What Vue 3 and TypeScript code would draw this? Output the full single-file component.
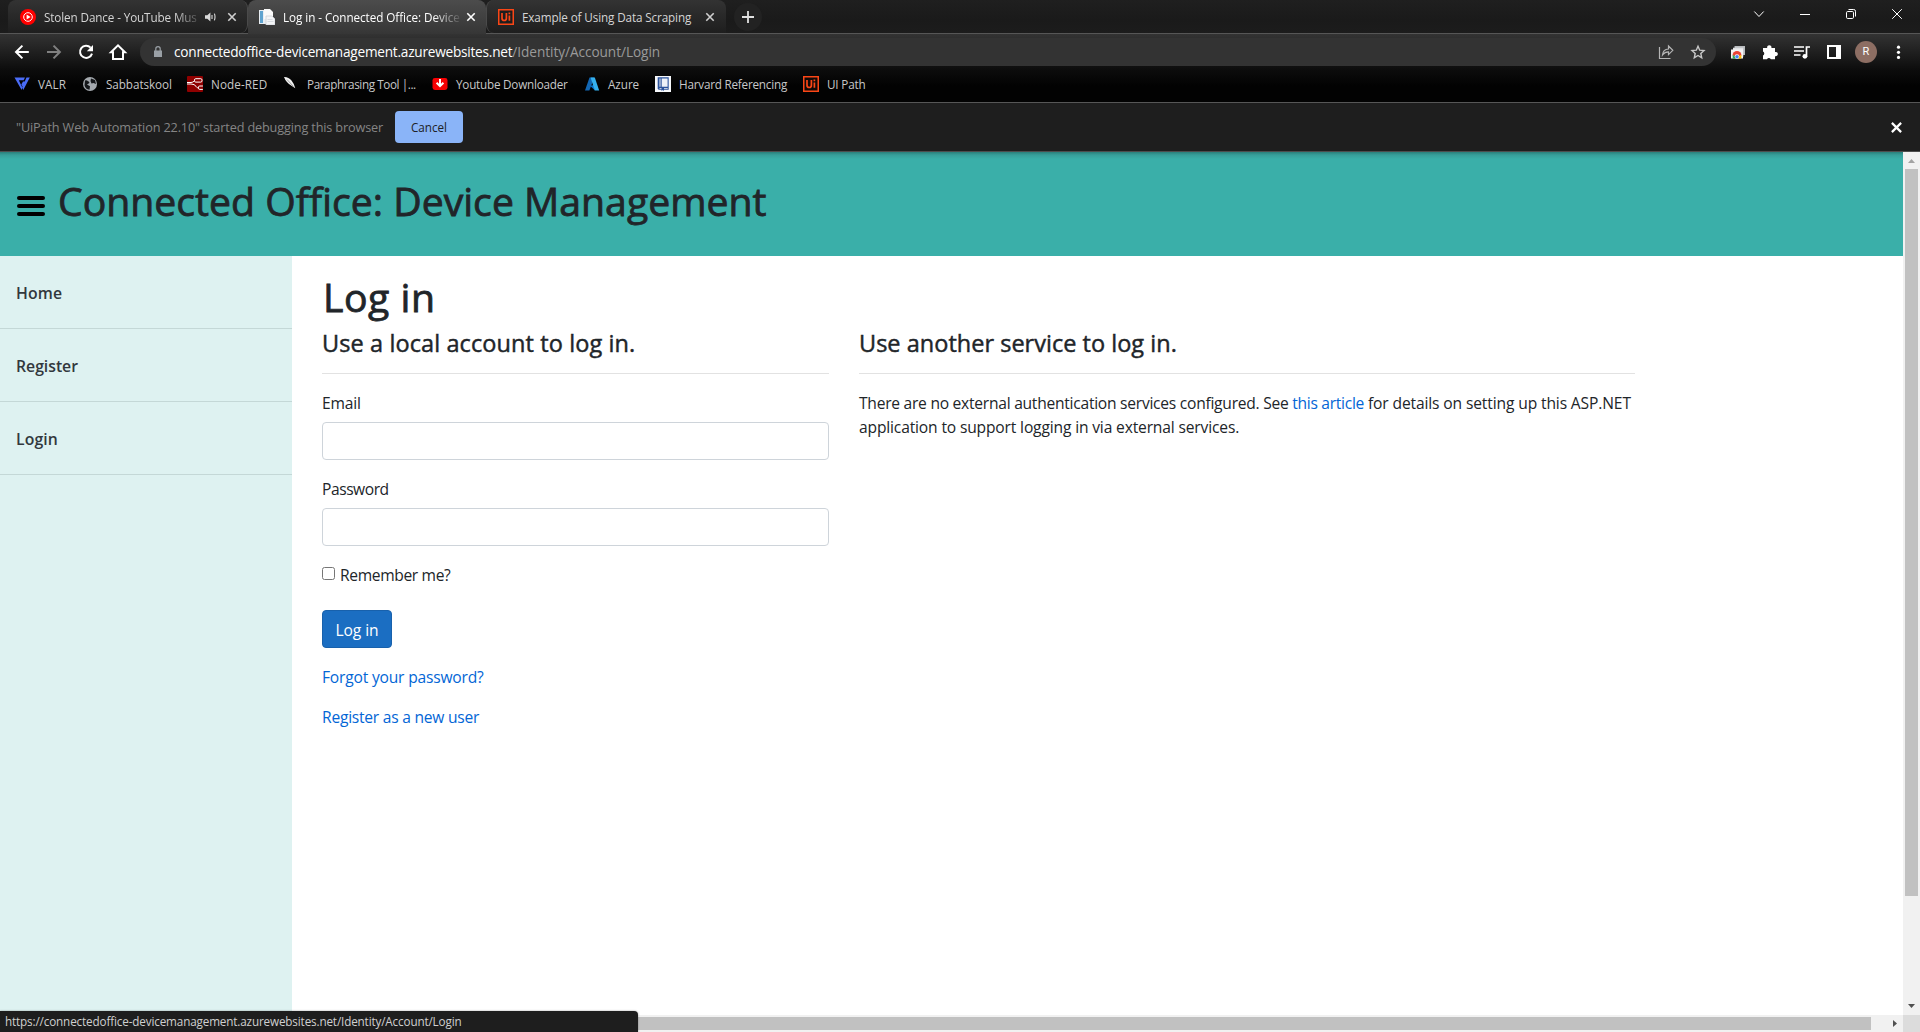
<script setup lang="ts">
interface Bookmark {
  icon: string
  label: string
  width: number
  spacing: number
}

const bookmarks: Bookmark[] = [
  { icon: 'valr', label: 'VALR', width: 68, spacing: 0.08 },
  { icon: 'globe', label: 'Sabbatskool', width: 105, spacing: -0.06 },
  { icon: 'nodered', label: 'Node-RED', width: 96, spacing: 0.1 },
  { icon: 'quill', label: 'Paraphrasing Tool |...', width: 149, spacing: -0.4 },
  { icon: 'download', label: 'Youtube Downloader', width: 152, spacing: -0.22 },
  { icon: 'azure', label: 'Azure', width: 71, spacing: -0.05 },
  { icon: 'book', label: 'Harvard Referencing', width: 148, spacing: -0.21 },
  { icon: 'uipath', label: 'UI Path', width: 80, spacing: -0.16 },
]

const menu = ['Home', 'Register', 'Login']
</script>

<template>
  <div class="window">
    <header class="tabstrip">
      <div class="tab tab-first">
        <svg class="fav" viewBox="0 0 16 16">
          <circle cx="8" cy="8" r="8" fill="#f00" />
          <circle cx="8" cy="8" r="4.3" fill="none" stroke="#fff" stroke-width="1" />
          <path d="M6.6 5.6 10.6 8l-4 2.4z" fill="#fff" />
        </svg>
        <span class="tab-title t1">Stolen Dance - YouTube Mus</span>
        <svg class="speaker" viewBox="0 0 11 10">
          <path d="M0 3.2h2.3L5.4.4v9.2L2.3 6.8H0z" fill="#dadada" />
          <path d="M7 3v4M9.4 1.6q1.2 3.4 0 6.8" fill="none" stroke="#dadada" stroke-width="1.1" />
        </svg>
        <svg class="tab-x" viewBox="0 0 8 8"><path d="M.3.3l7.4 7.4M7.7.3.3 7.7" /></svg>
      </div>
      <div class="tab active">
        <svg class="fav" viewBox="0 0 16 16">
          <path d="M0 1h12v14H0z" fill="#e8edf2" />
          <path d="M1 2h3v12H1z" fill="#5fa3cf" />
          <path d="M5 0h6l3 3v7H5z" fill="#fafafa" />
          <path d="M7 7h6l3 3v6H7z" fill="#f3f4f6" stroke="#c5cad1" stroke-width=".7" />
          <path d="M8.5 10.5h5M8.5 12.5h6" stroke="#cfd4da" stroke-width=".8" />
        </svg>
        <span class="tab-title t2">Log in - Connected Office: Device</span>
        <svg class="tab-x white" viewBox="0 0 8 8"><path d="M.3.3l7.4 7.4M7.7.3.3 7.7" /></svg>
      </div>
      <div class="tab">
        <svg class="fav" viewBox="0 0 16 16">
          <rect x=".75" y=".75" width="14.5" height="14.5" fill="#1e1e1e" stroke="#fa4616" stroke-width="1.5" />
          <path d="M4 4v5.2q0 2.3 2.2 2.3t2.2-2.3V4M11.4 6.4v5.4M11.4 3.6v1.6" fill="none" stroke="#fa4616" stroke-width="1.7" />
        </svg>
        <span class="tab-title t3">Example of Using Data Scraping</span>
        <svg class="tab-x" viewBox="0 0 8 8"><path d="M.3.3l7.4 7.4M7.7.3.3 7.7" /></svg>
      </div>
      <div class="newtab">
        <svg viewBox="0 0 12 12"><path d="M6 0v12M0 6h12" stroke="#e0e0e0" stroke-width="1.8" /></svg>
      </div>
      <div class="controls">
        <svg viewBox="0 0 46 28"><path d="m18.3 11.5 4.7 5 4.7-5" /></svg>
        <svg viewBox="0 0 46 28"><path d="M18 14.5h10" /></svg>
        <svg viewBox="0 0 46 28">
          <rect x="18.5" y="11.5" width="7" height="7" rx="1.2" />
          <path d="M20.5 9.5h5.2q1.8 0 1.8 1.8v5.2" />
        </svg>
        <svg viewBox="0 0 46 28"><path d="m18.2 9.2 9.6 9.6m0-9.6-9.6 9.6" /></svg>
      </div>
    </header>

    <div class="toolbar">
      <div class="nav">
        <svg class="ic" viewBox="0 0 32 28"><path d="M22.800 14H10.300M16.400 7.600 10 14l6.400 6.400" stroke="#fff" stroke-width="2" fill="none" /></svg>
        <svg class="ic" viewBox="0 0 32 28"><path d="M9 14h12.6M15.5 7.6l6.4 6.4-6.4 6.4" stroke="#808080" stroke-width="2" fill="none" /></svg>
        <svg class="ic" viewBox="0 0 32 28">
          <path d="M20.6 9.6A6.1 6.1 0 1 0 22 15.6" stroke="#fff" stroke-width="2" fill="none" />
          <path d="M23 7v6.2h-6.2z" fill="#fff" />
        </svg>
        <svg class="ic" viewBox="0 0 32 28"><path d="M9 14.2 16 7.4l7 6.8h-2v6.9H11v-6.9z" stroke="#fff" stroke-width="2" fill="none" /></svg>
      </div>
      <div class="omnibox">
        <svg class="lock" viewBox="0 0 8 12">
          <path d="M0 4.5h8V11H0z" fill="#9aa0a6" />
          <path d="M1.8 5V2.8a2.2 2.2 0 0 1 4.4 0V5" stroke="#9aa0a6" stroke-width="1.2" fill="none" />
        </svg>
        <span class="url"><span class="host">connectedoffice-devicemanagement.azurewebsites.net</span><span class="path">/Identity/Account/Login</span></span>
        <svg class="ic" viewBox="0 0 32 28">
          <path d="M9.5 9v11.5h11M12.5 17q.5-5.8 6-6V8l4.3 4.3-4.3 4.3v-2.8q-3.800 0-6 3.200z" stroke="#b5b5b5" stroke-width="1.2" fill="none" />
        </svg>
        <svg class="ic" viewBox="0 0 32 28">
          <path d="m16 8.200 1.700 4 4.300.4-3.200 2.900.9 4.300-3.700-2.300-3.700 2.300.9-4.300-3.200-2.900 4.300-.4z" stroke="#c8c8c8" stroke-width="1.400" fill="none" />
        </svg>
      </div>
      <div class="actions">
        <svg class="ic" viewBox="0 0 32 28">
          <path d="M12.500 8h10.500v9h-10.500z" fill="#b8bbbe" />
          <path d="M11 9.700h10.300v9H11z" fill="#dfe1e3" />
          <path d="M9 11.500h12v9H9z" fill="#f4f4f4" />
          <path d="M10.500 17.500a4.500 4.500 0 0 1 9 0l-2.500.500h-4z" fill="#ea4335" />
          <path d="M10.700 17v3.500h3.300l-.8-2.500z" fill="#34a853" />
          <path d="M19.300 17v3.500H16l.8-2.500z" fill="#fbbc04" />
          <circle cx="15" cy="18.600" r="2.300" fill="#fff" />
          <circle cx="15" cy="18.800" r="1.800" fill="#4285f4" />
        </svg>
        <svg class="ic" viewBox="0 0 32 28">
          <path d="M9 10h4.200a2.200 2.200 0 1 1 4.200 0H21v4a2.200 2.200 0 1 1 0 4.200V21.200h-4.200a2.200 2.200 0 0 0-3.800 0H9v-3.800a2.200 2.200 0 0 0 0-4z" fill="#fff" />
        </svg>
        <svg class="ic" viewBox="0 0 32 28">
          <path d="M8 9h10M8 13h10M8 17h6.500M20.500 18.500V9H24" stroke="#fff" stroke-width="1.700" fill="none" />
          <circle cx="18.900" cy="18.300" r="2.400" fill="#fff" />
        </svg>
        <svg class="ic" viewBox="0 0 32 28">
          <path d="M9 7h14v14H9zM11 9v10h7V9z" fill="#fff" fill-rule="evenodd" />
        </svg>
        <span class="avatar-cell"><span class="avatar">R</span></span>
        <svg class="ic" viewBox="0 0 32 28">
          <g fill="#fff"><circle cx="16.500" cy="9.200" r="1.600" /><circle cx="16.500" cy="14.300" r="1.600" /><circle cx="16.500" cy="19.400" r="1.600" /></g>
        </svg>
      </div>
    </div>

    <nav class="bookmarks">
      <a v-for="b in bookmarks" :key="b.label" class="bookmark" :style="{ width: b.width + 'px' }">
        <svg v-if="b.icon === 'valr'" class="bi" viewBox="0 0 16 16">
          <path d="M.5 1.500H11L9.600 4.300H4.800l3.500 7.200L7.600 14z" fill="#4a6cf7" />
          <path d="M12.500 1.500h3.300L9.300 14l-1.200-2.600zM9 5.500h2.200L8.400 10.500 7.300 8.400z" fill="#4a6cf7" />
        </svg>
        <svg v-else-if="b.icon === 'globe'" class="bi" viewBox="0 0 16 16">
          <circle cx="8" cy="8" r="7" fill="#a4a9ae" />
          <path d="M3 4.500q2-.5 3 .8 1.500.2 1.400 1.700L5 8.500l3 1.700-.5 3.500q-4-.5-5-4.500zM9 2.500l4 1.500 1 4-2.500-1-2 .5L8.500 5z" fill="#15171a" />
        </svg>
        <svg v-else-if="b.icon === 'nodered'" class="bi" viewBox="0 0 16 16">
          <rect width="16" height="16" rx="1" fill="#8f0000" />
          <path d="M0 6.500h4q2 0 3.500-1.700M0 8h4q3.500 0 5 2.300t3 1.700" fill="none" stroke="#fff" stroke-width="1" />
          <rect x="7.500" y="2.700" width="7.500" height="3.400" rx="1.200" fill="#8f0000" stroke="#fff" />
          <rect x="11.500" y="10" width="5.500" height="3.400" rx="1.200" fill="#8f0000" stroke="#fff" />
        </svg>
        <svg v-else-if="b.icon === 'quill'" class="bi" viewBox="0 0 16 16">
          <path d="M1 1q4.500-.2 7.500 3.500 3 3.800 3.800 7.700L8.500 9.800Q3 6.500 1 1z" fill="#f2f2f2" />
          <path d="M4 3.500 10.500 10.500" stroke="#888" stroke-width=".8" />
        </svg>
        <svg v-else-if="b.icon === 'download'" class="bi" viewBox="0 0 16 16">
          <rect x=".5" y="2" width="15" height="12" rx="2.400" fill="#f60002" />
          <path d="M8 3v7M4.600 6.800 8 10.200l3.400-3.400" fill="none" stroke="#fff" stroke-width="2" />
        </svg>
        <svg v-else-if="b.icon === 'azure'" class="bi" viewBox="0 0 16 16">
          <path d="M5.500 1.500h4.700L5.400 14.500H1z" fill="#1267b4" />
          <path d="M6 9.800 10 9l1 5.500z" fill="#0a74cc" />
          <path d="M6.600 1.500h4.200l4.400 13h-4.400z" fill="#35b0ee" />
        </svg>
        <svg v-else-if="b.icon === 'book'" class="bi" viewBox="0 0 16 16">
          <path d="M0 0h16v16H0z" fill="#f6f8fb" />
          <path d="M2.700 1.200h11v12.600H4.500q-1.800 0-1.800-1.600z" fill="#2a529b" />
          <path d="M4.500 2.400h1v8.300h-1zM6.700 2.400h5.900v8.300H6.700zM4.500 12h8.200v.8H4.500z" fill="#eef2f8" />
          <path d="M6.500 11.500h2.500V15l-1.200-1-1.300 1z" fill="#2a529b" />
        </svg>
        <svg v-else class="bi" viewBox="0 0 16 16">
          <rect x=".75" y=".75" width="14.500" height="14.500" fill="#110a08" stroke="#fa4616" stroke-width="1.500" />
          <path d="M4 4v5.200q0 2.300 2.200 2.300t2.200-2.300V4M11.400 6.400v5.400M11.400 3.600v1.600" fill="none" stroke="#fa4616" stroke-width="1.700" />
        </svg>
        <span class="bookmark-label" :style="{ letterSpacing: b.spacing + 'px' }">{{ b.label }}</span>
      </a>
    </nav>

    <div class="infobar">
      <span class="info-text">"UiPath Web Automation 22.10" started debugging this browser</span>
      <button class="cancel">Cancel</button>
      <svg class="info-x" viewBox="0 0 10 10"><path d="M.8.8l8.400 8.400M9.200.8.8 9.200" stroke="#fff" stroke-width="2" /></svg>
    </div>

    <div class="viewport">
      <div class="page">
        <div class="banner">
          <span class="burger"><i></i><i></i><i></i></span>
          <h1 class="site-title">Connected Office: Device Management</h1>
        </div>
        <div class="body">
          <aside class="sidebar">
            <a v-for="m in menu" :key="m" :class="['side-item', m.toLowerCase()]">{{ m }}</a>
          </aside>
          <main class="main">
            <h1 class="login-title">Log in</h1>
            <div class="row">
              <section class="local">
                <h4 class="h4-local">Use a local account to log in.</h4>
                <hr />
                <label class="email">Email</label>
                <input class="field" type="text" />
                <label class="password">Password</label>
                <input class="field" type="password" />
                <div class="remember"><input type="checkbox" class="check" /><span>Remember me?</span></div>
                <button class="submit">Log in</button>
                <p class="forgot"><a>Forgot your password?</a></p>
                <p class="register-link"><a>Register as a new user</a></p>
              </section>
              <section class="external">
                <h4 class="h4-ext">Use another service to log in.</h4>
                <hr />
                <p class="note"><span class="n1">There are no external authentication services configured. See </span><a class="n2">this article</a><span class="n3"> for details on setting up this ASP.NET</span><br /><span class="n4">application to support logging in via external services.</span></p>
              </section>
            </div>
          </main>
        </div>
        <div class="hscroll">
          <div class="hthumb"></div>
          <svg viewBox="0 0 17 17"><path d="M7 5v7l4-3.500z" fill="#505050" /></svg>
        </div>
      </div>
      <div class="vscroll">
        <svg viewBox="0 0 17 17"><path d="M5 11h7L8.500 7z" fill="#a3a3a3" /></svg>
        <div class="vthumb"></div>
        <svg class="down" viewBox="0 0 17 17"><path d="M5 6h7l-3.500 4z" fill="#505050" /></svg>
        <div class="corner"></div>
      </div>
      <div class="status">https://connectedoffice-devicemanagement.azurewebsites.net/Identity/Account/Login</div>
    </div>
  </div>
</template>

<style>
body {
  overflow: hidden;
}
</style>

<style scoped>
* {
  box-sizing: border-box;
}
.window {
  width: 1920px;
  height: 1032px;
  display: flex;
  flex-direction: column;
  overflow: hidden;
  background: #fff;
  font-family: "Segoe UI", "Open Sans", "Noto Sans", sans-serif;
  font-size: 15.6px;
  color: #212529;
}
svg {
  display: block;
  flex: none;
}

/* Tab strip */
.tabstrip {
  height: 34px;
  flex: none;
  display: flex;
  padding-left: 8px;
  background: linear-gradient(#1f1f1f, #1a1a1a 20px, #1c1c1c);
  border-bottom: 1px solid #565656;
}
.tab {
  width: 239px;
  height: 33px;
  flex: none;
  display: flex;
  align-items: center;
  padding: 1px 12px 0;
  border-radius: 8px 8px 0 0;
  background: linear-gradient(#333, #1e1e1e);
  color: #d5d5d5;
  font-size: 11.7px;
}
.tab-first {
  border-right: 1px solid #4a4a4a;
  border-radius: 8px 8px 8px 0;
  width: 240px;
}
.tab.active {
  width: 238px;
  height: 34px;
  padding-bottom: 1px;
  background: linear-gradient(#4c4c4c, #363636);
  color: #fff;
}
.tab.active + .tab {
  border-left: 1px solid #4a4a4a;
  border-radius: 8px 8px 0 8px;
  width: 240px;
  padding-left: 11px;
}
.fav {
  width: 16px;
  height: 16px;
  margin-right: 8px;
}
.active .fav {
  margin-left: -1px;
}
.tab-title {
  flex: none;
  white-space: nowrap;
  line-height: 20px;
  padding-bottom: 1px;
}
.t1 {
  width: 156px;
  letter-spacing: -0.115px;
  -webkit-mask-image: linear-gradient(90deg, #000 130px, transparent 160px);
  mask-image: linear-gradient(90deg, #000 130px, transparent 160px);
}
.t2 {
  width: 179px;
  letter-spacing: -0.05px;
  -webkit-mask-image: linear-gradient(90deg, #000 150px, transparent 180px);
  mask-image: linear-gradient(90deg, #000 150px, transparent 180px);
}
.t3 {
  width: 178px;
  letter-spacing: -0.12px;
}
.speaker {
  width: 11px;
  height: 10px;
  margin-left: 5px;
}
.tab-x {
  width: 8px;
  height: 8px;
  margin-left: auto;
  stroke: #d0d0d0;
  stroke-width: 1.6;
  overflow: visible;
}
.tab-first .tab-x {
  margin-right: -1px;
}
.active .tab-x {
  margin-right: -1px;
}
.white {
  stroke: #fff;
}
.newtab {
  width: 28px;
  height: 28px;
  margin: 3px 0 0 8px;
  border-radius: 14px;
  background: #222;
  display: flex;
  align-items: center;
  justify-content: center;
}
.newtab svg {
  width: 12px;
  height: 12px;
}
.controls {
  display: flex;
  margin-left: auto;
}
.controls svg {
  width: 46px;
  height: 28px;
  fill: none;
  stroke: #fff;
  stroke-width: 1;
}

/* Toolbar */
.toolbar {
  height: 36px;
  flex: none;
  display: flex;
  align-items: flex-start;
  padding: 4px 6px 0;
  background: linear-gradient(#333, #0c0c0c);
}
.nav,
.actions {
  display: flex;
  height: 28px;
}
.nav {
  width: 134px;
}
.ic {
  width: 32px;
  height: 28px;
}
.omnibox {
  width: 1576px;
  height: 28px;
  display: flex;
  align-items: center;
  padding: 0 2px 0 14px;
  border-radius: 14px;
  background: #333;
}
.lock {
  width: 8px;
  height: 12px;
}
.url {
  margin-left: 12px;
  margin-right: auto;
  font-size: 13.65px;
  line-height: 20px;
  white-space: nowrap;
  color: #9a9a9a;
}
.host {
  color: #fff;
  letter-spacing: -0.24px;
}
.path {
  letter-spacing: -0.06px;
}
.actions {
  margin-left: 6px;
}
.avatar-cell {
  width: 32px;
  display: flex;
  align-items: center;
  justify-content: center;
}
.avatar {
  width: 22px;
  height: 22px;
  border-radius: 50%;
  background: #8d6e63;
  color: #fff;
  font: 11px/22px Roboto, sans-serif;
  text-align: center;
}

/* Bookmarks */
.bookmarks {
  height: 33px;
  flex: none;
  display: flex;
  padding: 4px 0 0 14px;
  background: linear-gradient(#0c0c0c, #020202 16px, #020202);
  border-bottom: 1px solid #565656;
}
.bookmark {
  display: flex;
  align-items: center;
  height: 20px;
  gap: 8px;
  font-size: 11.7px;
  line-height: 20px;
  white-space: nowrap;
}
.bookmark-label {
  padding-bottom: 1px;
}
.bi {
  width: 16px;
  height: 16px;
}

/* Infobar */
.infobar {
  height: 49px;
  flex: none;
  display: flex;
  align-items: center;
  padding: 0 18px 0 16px;
  background: #1e1e1e;
  border-bottom: 1px solid #4d4d4d;
}
.info-text {
  width: 379px;
  font-size: 12.7px;
  line-height: 20px;
  letter-spacing: -0.15px;
  white-space: nowrap;
  color: #858585;
}
.cancel {
  width: 68px;
  height: 32px;
  padding: 0 0 1px;
  border: 0;
  border-radius: 4px;
  background: #8ab4f8;
  color: #202124;
  font: 11.7px/30px "Segoe UI", "Open Sans", sans-serif;
}
.info-x {
  width: 11px;
  height: 11px;
  margin-left: auto;
}

/* Page */
.viewport {
  position: relative;
  flex: 1;
  display: flex;
  min-height: 0;
}
.page {
  width: 1903px;
  display: flex;
  flex-direction: column;
}
.banner {
  height: 104px;
  flex: none;
  display: flex;
  padding: 24px 0 0 17px;
  background: linear-gradient(#2a7f7b, #379f9a 3px, #3aafa9 7px);
}
.burger {
  width: 28px;
  display: flex;
  flex-direction: column;
  gap: 4px;
  padding-top: 20px;
  margin-right: 13px;
}
.burger i {
  height: 4px;
  border-radius: 2px;
  background: #000;
}
h1,
h4,
p {
  margin: 0;
}
h1 {
  font-size: 39.2px;
  line-height: 49px;
  font-weight: 500;
  -webkit-text-stroke: 0.8px #212529;
}
.body {
  flex: 1;
  display: flex;
  min-height: 0;
}
.sidebar {
  width: 292px;
  background: #def2f1;
}
.side-item {
  display: block;
  height: 73px;
  padding: 25px 16px 0;
  border-bottom: 1px solid #c4d8d7;
  font-size: 15.8px;
  line-height: 24px;
  font-weight: 600;
  text-decoration: none;
}
.home,
.login {
  letter-spacing: 0.1px;
}
.register {
  letter-spacing: -0.03px;
}
.main {
  padding: 16px 0 0 30px;
}
.login-title {
  height: 56px;
  padding-left: 1px;
  letter-spacing: 0.5px;
}
.row {
  display: flex;
  gap: 30px;
}
.local {
  width: 507px;
}
.external {
  width: 776px;
}
h4 {
  padding-top: 1px;
  font-size: 23.5px;
  line-height: 29px;
  font-weight: 500;
  -webkit-text-stroke: 0.45px #212529;
}
.h4-local {
  letter-spacing: 0.1px;
}
.h4-ext {
  letter-spacing: 0.02px;
}
hr {
  height: 1px;
  margin: 15px 0 16px;
  border: 0;
  background: #e2e2e2;
}
label {
  display: block;
  padding-top: 1px;
  margin-bottom: 7px;
  line-height: 24px;
}
.email {
  letter-spacing: -0.2px;
}
.password {
  letter-spacing: -0.45px;
}
.field {
  display: block;
  width: 507px;
  height: 38px;
  margin: 0 0 16px;
  border: 1px solid #ced4da;
  border-radius: 4px;
  background: #fff;
}
.remember {
  display: flex;
  height: 24px;
  margin-bottom: 24px;
  line-height: 24px;
  letter-spacing: -0.35px;
}
.remember span {
  padding-top: 1px;
}
.check {
  width: 13px;
  height: 13px;
  margin: 5px 5px 0 0;
}
.submit {
  display: block;
  width: 70px;
  height: 38px;
  padding: 1px 0 0;
  margin-bottom: 16px;
  border: 1px solid #1861ac;
  border-radius: 4px;
  background: #1b6ec2;
  color: #fff;
  font: 15.6px/24px "Segoe UI", "Open Sans", sans-serif;
  letter-spacing: -0.1px;
}
p {
  padding-top: 1px;
  line-height: 24px;
  margin-bottom: 15px;
  white-space: nowrap;
}
a {
  color: #0366d6;
}
a.bookmark {
  color: #c8c8c8;
}
a.side-item {
  color: #32383d;
}
.forgot {
  letter-spacing: -0.19px;
}
.register-link {
  letter-spacing: -0.24px;
}
.n1 {
  letter-spacing: -0.255px;
}
.n2 {
  letter-spacing: -0.29px;
}
.n3 {
  letter-spacing: -0.13px;
}
.n4 {
  letter-spacing: -0.155px;
}

/* Scrollbars */
.hscroll {
  height: 17px;
  flex: none;
  display: flex;
  align-items: center;
  padding-left: 17px;
  background: #f1f1f1;
}
.hthumb {
  width: 1854px;
  height: 13px;
  margin-right: 15px;
  background: #c1c1c1;
}
.hscroll svg,
.vscroll svg {
  width: 17px;
  height: 17px;
}
.vscroll {
  width: 17px;
  display: flex;
  flex-direction: column;
  align-items: center;
  background: #f1f1f1;
}
.vthumb {
  width: 13px;
  height: 727px;
  background: #c1c1c1;
}
.down {
  margin-top: auto;
}
.corner {
  width: 17px;
  height: 17px;
  background: #dcdcdc;
}
.status {
  position: absolute;
  left: 0;
  bottom: 0;
  width: 638px;
  height: 21px;
  padding-left: 5px;
  border-radius: 0 4px 0 0;
  box-shadow: 0 0 2px rgba(0, 0, 0, 0.4);
  background: #1e1e1e;
  color: #d0d0d0;
  font-size: 11.7px;
  line-height: 21px;
  letter-spacing: -0.14px;
  white-space: nowrap;
}
</style>
